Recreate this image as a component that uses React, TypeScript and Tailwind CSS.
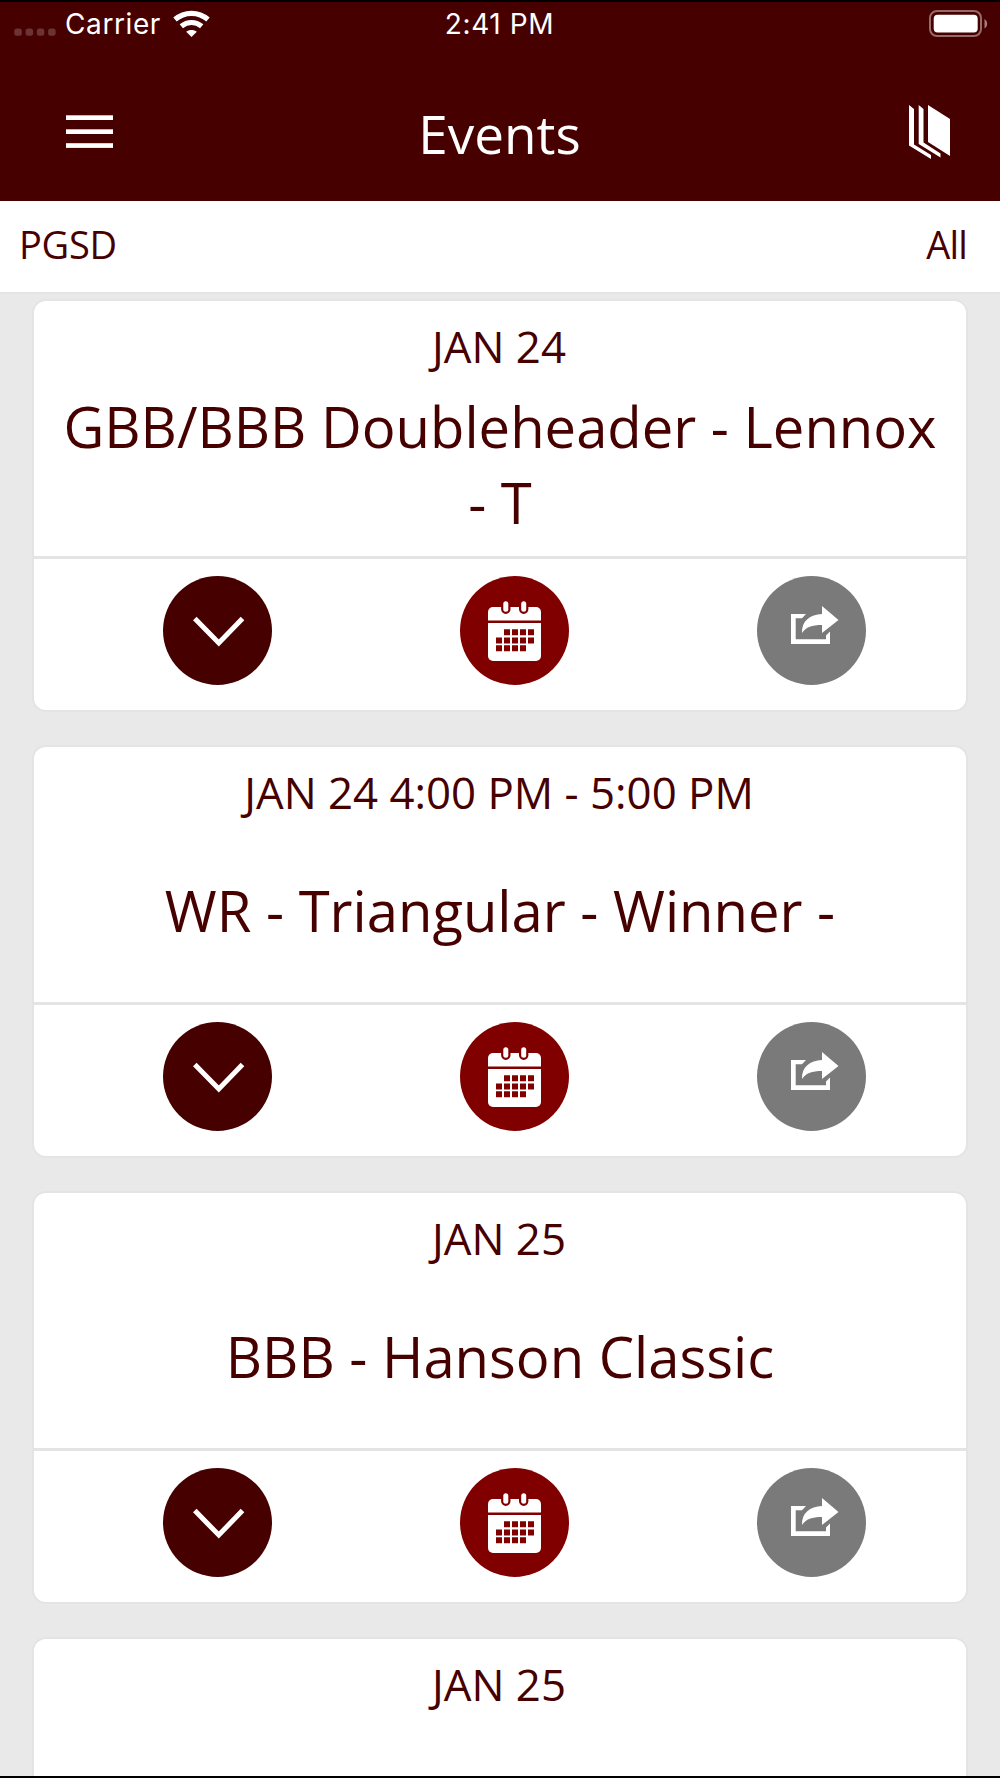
import React from 'react';

const events = [
  { date: 'JAN 24', title: 'GBB/BBB Doubleheader - Lennox - T' },
  { date: 'JAN 24 4:00 PM - 5:00 PM', title: 'WR - Triangular - Winner -' },
  { date: 'JAN 25', title: 'BBB - Hanson Classic' },
  { date: 'JAN 25', title: '' },
];

function StatusBar() {
  return (
    <div className="grid h-[44px] grid-cols-3 items-center pr-3 pl-3.5 font-['Inter'] text-[28px] leading-none tracking-[0.6px] text-white">
      <div className="flex items-center">
        <svg className="mt-4" width="43" height="8" viewBox="0 0 43 8" fill="#fff" opacity=".2">
          <rect x="0.3" y="0.5" width="7.5" height="7.2" rx="2.5" />
          <rect x="11.6" y="0.5" width="7.5" height="7.2" rx="2.5" />
          <rect x="22.8" y="0.5" width="7.5" height="7.2" rx="2.5" />
          <rect x="34.1" y="0.5" width="7.5" height="7.2" rx="2.5" />
        </svg>
        <span className="ml-2">Carrier</span>
        <svg className="ml-3" width="37" height="28" viewBox="0 0 37 28" fill="none" stroke="#fff">
          <path d="M2 9.5C11.5 1.2 25.5 1.2 35 9.5" strokeWidth="5.2" />
          <path d="M8.3 16.3C14.5 11.2 22.5 11.2 28.7 16.3" strokeWidth="5.2" />
          <path d="M13.2 21.8C16 19.3 21 19.3 23.8 21.8L18.5 27Z" fill="#fff" stroke="none" />
        </svg>
      </div>
      <span className="pr-[3px] text-center">2:41 PM</span>
      <svg className="ml-auto translate-x-px" width="60" height="28" viewBox="0 0 60 28" fill="none">
        <rect x="1" y="1" width="51" height="25" rx="7" stroke="#fff" strokeOpacity=".42" strokeWidth="2" />
        <rect x="4.7" y="4.7" width="44" height="17.8" rx="4" fill="#fff" />
        <path d="M55.5 9C59 11 59 16.5 55.5 18.5Z" fill="#fff" fillOpacity=".5" />
      </svg>
    </div>
  );
}

function MenuIcon() {
  return (
    <svg width="48" height="34" viewBox="0 0 48 34" fill="#fff">
      <rect y="0.3" width="47" height="4.7" />
      <rect y="14.3" width="47" height="4.7" />
      <rect y="28.2" width="47" height="4.7" />
    </svg>
  );
}

function BookIcon() {
  return (
    <svg width="42" height="54" viewBox="0 0 42 54" fill="#fff">
      <path d="M0 0L5 4V39.5L22 50V54L0 40.5Z" />
      <path d="M9.7 0L14.5 4V37.5L31.5 48.5V52.5L9.7 39Z" />
      <path d="M19 0L41 14V51L19 37Z" />
    </svg>
  );
}

function ChevronIcon() {
  return (
    <svg width="109" height="109" viewBox="0 0 109 109" fill="none" stroke="#fff" strokeWidth="5">
      <path d="M31.8 42.6L55.8 67L79.5 42.6" />
    </svg>
  );
}

function CalendarIcon() {
  return (
    <svg width="109" height="109" viewBox="0 0 109 109">
      <path d="M28 44.5V36a5 5 0 0 1 5-5H76a5 5 0 0 1 5 5V44.5Z" fill="#fff" />
      <path d="M28 47H81V80a5 5 0 0 1-5 5H33a5 5 0 0 1-5-5Z" fill="#fff" />
      <rect x="43.3" y="25.2" width="5" height="10.5" rx="2.5" fill="#fff" stroke="maroon" strokeWidth="4.4" paintOrder="stroke" />
      <rect x="61.2" y="25.2" width="5" height="10.5" rx="2.5" fill="#fff" stroke="maroon" strokeWidth="4.4" paintOrder="stroke" />
      <path
        d="M44 53.3h6v6h-6zM52 53.3h6v6h-6zM60 53.3h6v6h-6zM68 53.3h6v6h-6zM36 61.4h6v6h-6zM44 61.4h6v6h-6zM52 61.4h6v6h-6zM60 61.4h6v6h-6zM68 61.4h6v6h-6zM36 69.3h6v6h-6zM44 69.3h6v6h-6zM52 69.3h6v6h-6zM60 69.3h6v6h-6z"
        fill="maroon"
      />
    </svg>
  );
}

function ShareIcon() {
  return (
    <svg width="109" height="109" viewBox="0 0 109 109" fill="#fff">
      <path d="M34 38H49L45 42.3H38.7V63.3H69V59.5L73 55.5V68H34Z" />
      <path d="M65 30L81.5 44L65 57V49C55 49 49 51 45 57C44.5 45 53 38.5 65 38Z" />
    </svg>
  );
}

function EventCard({ date, title }: { date: string; title: string }) {
  return (
    <div className="h-[409px] shrink-0 rounded-xl bg-white text-center text-[#460000] ring-2 ring-[#e4e4e4]">
      <div className="flex h-[255px] flex-col pt-4">
        <div className="pr-[2px] text-[43.8px] leading-[58px]">{date}</div>
        <div className="mt-[6px] flex h-[166px] items-center justify-center px-5 text-[56.2px] leading-[76px]">
          <span>{title}</span>
        </div>
      </div>
      <div className="flex h-[154px] gap-[188px] border-t-[3px] border-[#e4e4e4] pt-[17.4px] pl-[129.4px]">
        <button className="size-[109px] rounded-full bg-[#460000]"><ChevronIcon /></button>
        <button className="size-[109px] rounded-full bg-[maroon]"><CalendarIcon /></button>
        <button className="size-[109px] rounded-full bg-[#7a7a7a]"><ShareIcon /></button>
      </div>
    </div>
  );
}

export default function App() {
  return (
    <div className="flex h-[1778px] w-[1000px] flex-col overflow-hidden border-y-2 border-black bg-[#e9e9e9] font-['Open_Sans',sans-serif]">
      <header className="h-[199px] shrink-0 bg-[#460000]">
        <StatusBar />
        <div className="grid h-[155px] grid-cols-3 items-center pt-4 pr-[49px] pl-[66px]">
          <MenuIcon />
          <h1 className="pt-[5px] pr-[18px] text-center text-[53px] leading-[72px] text-white">Events</h1>
          <div className="ml-auto"><BookIcon /></div>
        </div>
      </header>

      {/* Calendar filters */}
      <div className="flex h-[91px] shrink-0 items-center justify-between bg-white pr-[33px] pb-1 pl-[19px] text-[38px] text-[#460000]">
        <span className="tracking-[-0.3px]">PGSD</span>
        <span className="tracking-[-0.8px]">All</span>
      </div>

      <main className="flex min-h-0 flex-1 flex-col gap-[37px] overflow-hidden border-t-2 border-[#e4e4e4] px-[34px] pt-[7px]">
        {events.map((event, i) => (
          <EventCard key={i} date={event.date} title={event.title} />
        ))}
      </main>
    </div>
  );
}
